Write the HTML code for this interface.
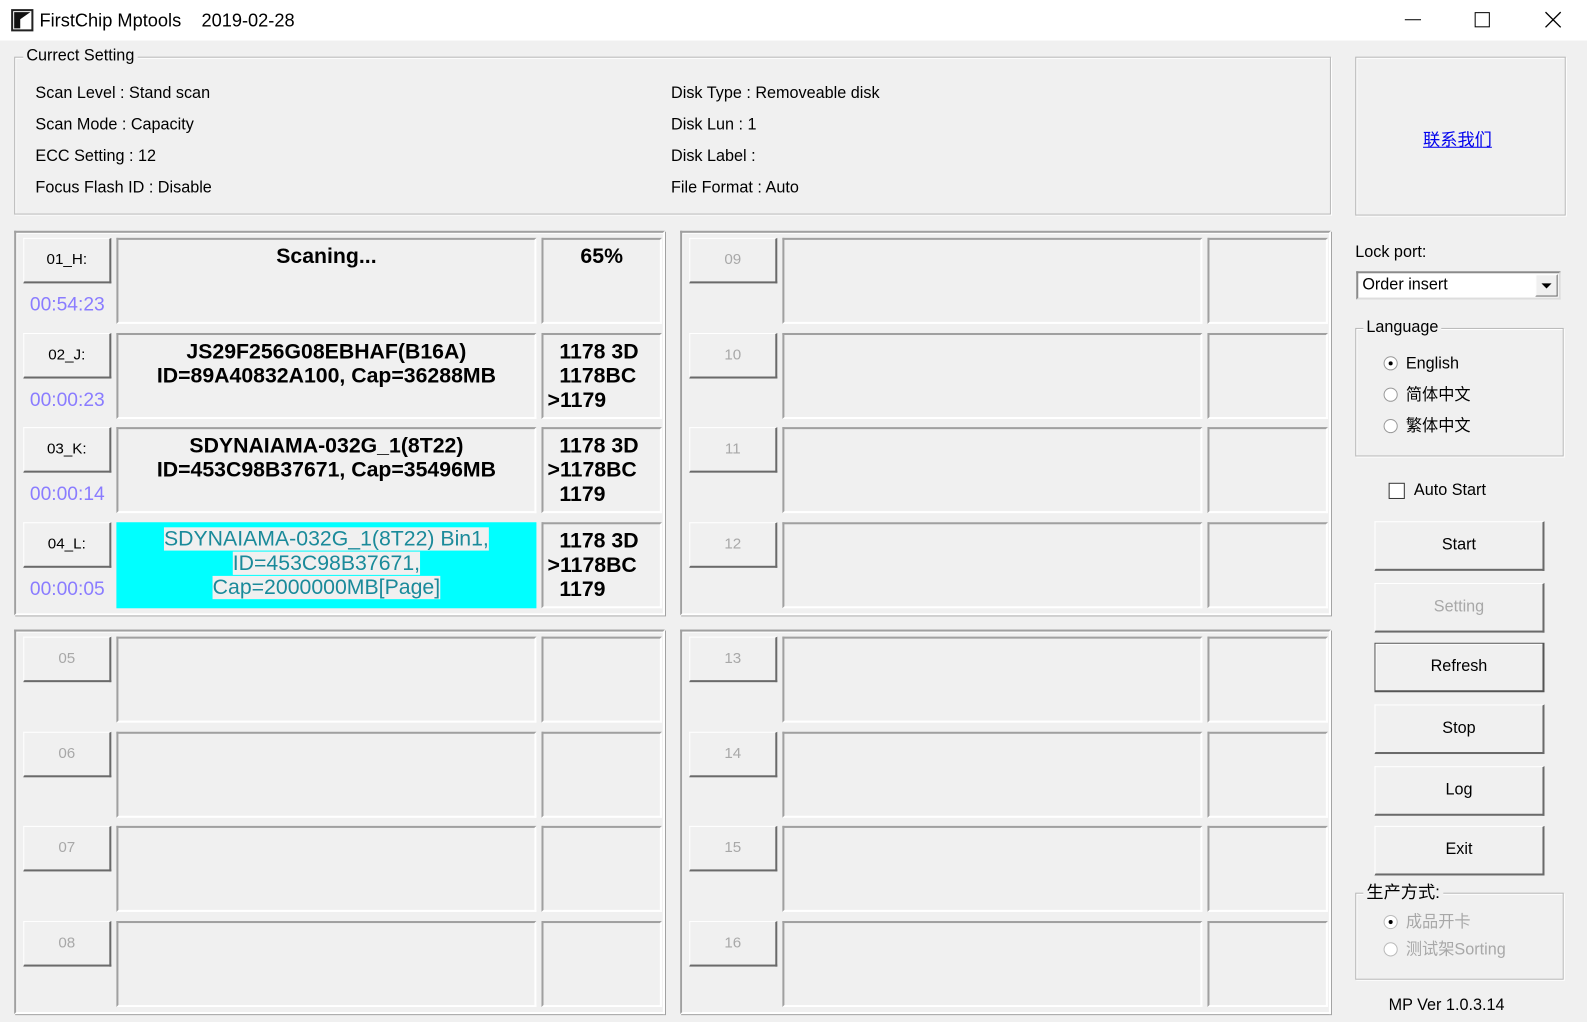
<!DOCTYPE html>
<html><head><meta charset="utf-8"><style>
*{box-sizing:border-box;margin:0;padding:0}
body{width:1587px;height:1022px;background:#f0f0f0;position:relative;overflow:hidden;font-family:"Liberation Sans","Noto Sans CJK SC",sans-serif;font-size:16px;color:#000}
#w{position:absolute;left:0;top:0;width:1568px;height:1010px;transform:scale(1.01212);transform-origin:0 0}
.a{position:absolute}
.tb{left:0;top:0;width:1568px;height:40px;background:#fff}
.grp{position:absolute;border:1px solid #b8b8b8;box-shadow:inset 1px 1px 0 #fff,1px 1px 0 #fff}
.lg{position:absolute;background:#f0f0f0;padding:0 3px;top:-10px;left:8px;line-height:18px}
.pan{position:absolute;width:643px;height:380px;border:2px solid #a0a0a0;border-right-color:#fff;border-bottom-color:#fff;box-shadow:1px 1px 0 #a0a0a0,inset 1px 1px 0 #fff}
.btn{position:absolute;width:87px;height:45px;border:1px solid #fff;border-right:2px solid #6a6a6a;border-bottom:2px solid #6a6a6a;text-align:center;line-height:42px;font-size:15px;background:#f0f0f0}
.dis{color:#a8a8a8}
.cell{position:absolute;height:85px;border:2px solid #a0a0a0;border-right-color:#fff;border-bottom-color:#fff}
.n{width:415px}.r{width:119px}
.t{position:absolute;width:87px;text-align:center;color:#8a7cff;font-size:19px}
.bt{font-family:"Liberation Sans",Arial,sans-serif;font-weight:bold;font-size:21px;line-height:24px}
.rb{position:absolute;width:168px;height:49px;border:1px solid #fff;border-right:2px solid #6a6a6a;border-bottom:2px solid #6a6a6a;text-align:center;line-height:46px}
.radio{display:inline-block;width:14px;height:14px;border-radius:50%;border:1px solid #999;background:#fff;vertical-align:-2px;margin-right:8px;position:relative}
.dot:after{content:"";position:absolute;left:4px;top:4px;width:4px;height:4px;border-radius:50%;background:#000}
</style></head><body><div id="w">
<div class="a tb"></div>
<div class="a" style="left:11px;top:9px;width:22px;height:22px;border:2px solid #222;background:#fff"><svg width="18" height="18" viewBox="0 0 18 18"><path d="M1 1H17L7 8V17H1Z" fill="#111"/></svg></div>
<div class="a" style="left:39px;top:10px;font-size:18px">FirstChip Mptools&nbsp;&nbsp;&nbsp;&nbsp;2019-02-28</div>
<div class="a" style="left:1388px;top:19px;width:16px;height:1px;background:#000"></div>
<div class="a" style="left:1457px;top:12px;width:15px;height:15px;border:1px solid #000"></div>
<svg class="a" style="left:1526px;top:11px" width="17" height="17"><path d="M1 1L16 16M16 1L1 16" stroke="#000" stroke-width="1.3"/></svg>

<div class="grp" style="left:14px;top:56px;width:1301px;height:156px"><div class="lg">Currect Setting</div></div>
<div class="a" style="left:35px;top:77px;line-height:31px">Scan Level : Stand scan<br>Scan Mode : Capacity<br>ECC Setting : 12<br>Focus Flash ID : Disable</div>
<div class="a" style="left:663px;top:77px;line-height:31px">Disk Type : Removeable disk<br>Disk Lun : 1<br>Disk Label :<br>File Format : Auto</div>

<div class="grp" style="left:1339px;top:56px;width:208px;height:157px"></div>
<div class="a" style="left:1406px;top:124px;color:#0000ee;text-decoration:underline;font-size:17px">联系我们</div>

<div class="pan" style="left:14px;top:228px">
 <div class="btn" style="left:7px;top:5px">01_H:</div><div class="t" style="left:7px;top:61px">00:54:23</div>
 <div class="cell n bt" style="left:99px;top:5px;text-align:center;padding-top:5px">Scaning...</div>
 <div class="cell r bt" style="left:519px;top:5px;text-align:center;padding-top:5px">65%</div>
 <div class="btn" style="left:7px;top:99px">02_J:</div><div class="t" style="left:7px;top:155px">00:00:23</div>
 <div class="cell n bt" style="left:99px;top:99px;text-align:center;padding-top:5px">JS29F256G08EBHAF(B16A)<br>ID=89A40832A100, Cap=36288MB</div>
 <div class="cell r bt" style="left:519px;top:99px;padding:5px 0 0 4px">&nbsp;&nbsp;1178 3D<br>&nbsp;&nbsp;1178BC<br>&gt;1179</div>
 <div class="btn" style="left:7px;top:192px">03_K:</div><div class="t" style="left:7px;top:248px">00:00:14</div>
 <div class="cell n bt" style="left:99px;top:192px;text-align:center;padding-top:5px">SDYNAIAMA-032G_1(8T22)<br>ID=453C98B37671, Cap=35496MB</div>
 <div class="cell r bt" style="left:519px;top:192px;padding:5px 0 0 4px">&nbsp;&nbsp;1178 3D<br>&gt;1178BC<br>&nbsp;&nbsp;1179</div>
 <div class="btn" style="left:7px;top:286px">04_L:</div><div class="t" style="left:7px;top:342px">00:00:05</div>
 <div class="cell n" style="left:99px;top:286px;background:#00ffff;border:none;text-align:center;padding-top:5px;font-size:21px;line-height:24px;color:#1a8a9a"><span style="background:#f0f0f0">SDYNAIAMA-032G_1(8T22) Bin1,</span><br><span style="background:#f0f0f0">ID=453C98B37671,</span><br><span style="background:#f0f0f0">Cap=2000000MB[Page]</span></div>
 <div class="cell r bt" style="left:519px;top:286px;padding:5px 0 0 4px">&nbsp;&nbsp;1178 3D<br>&gt;1178BC<br>&nbsp;&nbsp;1179</div>
</div>

<div class="pan" style="left:672px;top:228px">
 <div class="btn dis" style="left:7px;top:5px">09</div><div class="cell n" style="left:99px;top:5px"></div><div class="cell r" style="left:519px;top:5px"></div>
 <div class="btn dis" style="left:7px;top:99px">10</div><div class="cell n" style="left:99px;top:99px"></div><div class="cell r" style="left:519px;top:99px"></div>
 <div class="btn dis" style="left:7px;top:192px">11</div><div class="cell n" style="left:99px;top:192px"></div><div class="cell r" style="left:519px;top:192px"></div>
 <div class="btn dis" style="left:7px;top:286px">12</div><div class="cell n" style="left:99px;top:286px"></div><div class="cell r" style="left:519px;top:286px"></div>
</div>
<div class="pan" style="left:14px;top:622px">
 <div class="btn dis" style="left:7px;top:5px">05</div><div class="cell n" style="left:99px;top:5px"></div><div class="cell r" style="left:519px;top:5px"></div>
 <div class="btn dis" style="left:7px;top:99px">06</div><div class="cell n" style="left:99px;top:99px"></div><div class="cell r" style="left:519px;top:99px"></div>
 <div class="btn dis" style="left:7px;top:192px">07</div><div class="cell n" style="left:99px;top:192px"></div><div class="cell r" style="left:519px;top:192px"></div>
 <div class="btn dis" style="left:7px;top:286px">08</div><div class="cell n" style="left:99px;top:286px"></div><div class="cell r" style="left:519px;top:286px"></div>
</div>
<div class="pan" style="left:672px;top:622px">
 <div class="btn dis" style="left:7px;top:5px">13</div><div class="cell n" style="left:99px;top:5px"></div><div class="cell r" style="left:519px;top:5px"></div>
 <div class="btn dis" style="left:7px;top:99px">14</div><div class="cell n" style="left:99px;top:99px"></div><div class="cell r" style="left:519px;top:99px"></div>
 <div class="btn dis" style="left:7px;top:192px">15</div><div class="cell n" style="left:99px;top:192px"></div><div class="cell r" style="left:519px;top:192px"></div>
 <div class="btn dis" style="left:7px;top:286px">16</div><div class="cell n" style="left:99px;top:286px"></div><div class="cell r" style="left:519px;top:286px"></div>
</div>

<div class="a" style="left:1339px;top:241px">Lock port:</div>
<div class="a" style="left:1340px;top:268px;width:202px;height:28px;background:#fff;border:2px solid #8a8a8a;border-right-color:#ddd;border-bottom-color:#ddd;padding:3px 4px">Order insert</div>
<div class="a" style="left:1517px;top:271px;width:22px;height:22px;border:1px solid #fff;border-right:1px solid #666;border-bottom:1px solid #666;background:#f0f0f0"><svg width="20" height="20"><path d="M5 8H15L10 13Z" fill="#000"/></svg></div>

<div class="grp" style="left:1339px;top:324px;width:206px;height:127px"><div class="lg" style="left:7px">Language</div></div>
<div class="a" style="left:1367px;top:344px;line-height:31px;font-size:16px"><span class="radio dot"></span>English<br><span class="radio"></span>简体中文<br><span class="radio"></span>繁体中文</div>
<div class="a" style="left:1372px;top:477px;width:16px;height:16px;border:1px solid #333;background:#fff"></div>
<div class="a" style="left:1397px;top:476px">Auto Start</div>

<div class="rb" style="left:1358px;top:515px">Start</div>
<div class="rb dis" style="left:1358px;top:576px">Setting</div>
<div class="rb" style="left:1358px;top:635px;border:1px solid #555;border-right:2px solid #555;border-bottom:2px solid #555;box-shadow:inset 1px 1px 0 #fff">Refresh</div>
<div class="rb" style="left:1358px;top:696px">Stop</div>
<div class="rb" style="left:1358px;top:757px">Log</div>
<div class="rb" style="left:1358px;top:816px">Exit</div>

<div class="grp" style="left:1339px;top:882px;width:206px;height:86px"><div class="lg" style="left:7px;font-size:17px">生产方式:</div></div>
<div class="a dis" style="left:1367px;top:898px;line-height:27px"><span class="radio dot" style="border-color:#bbb"></span>成品开卡<br><span class="radio" style="border-color:#bbb"></span>测试架Sorting</div>
<div class="a" style="left:1372px;top:985px;font-size:16px">MP Ver 1.0.3.14</div>
</div></body></html>
